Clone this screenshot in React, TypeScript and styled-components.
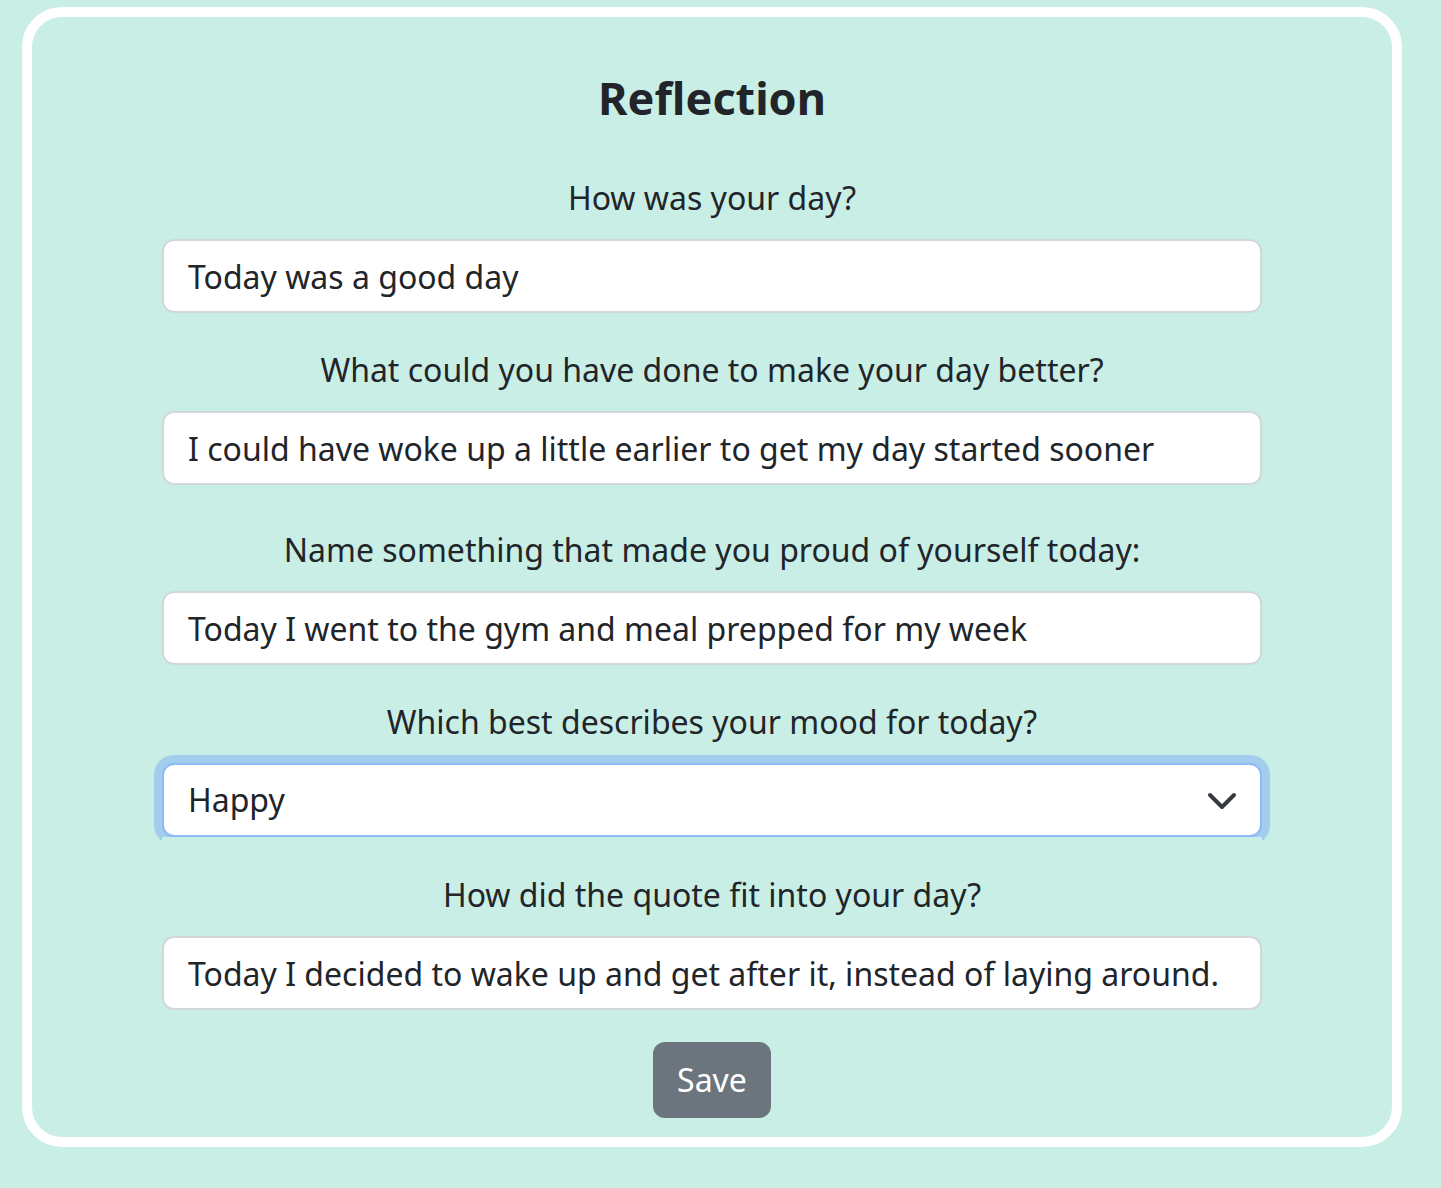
import React from "react";
import styled, { createGlobalStyle } from "styled-components";

const mint = "#c9eee6";

const GlobalStyle = createGlobalStyle`
  html, body {
    margin: 0;
    padding: 0;
    background: ${mint};
    font-family: "Noto Sans", "Open Sans", sans-serif;
    color: #212529;
  }
  * { box-sizing: border-box; }
`;

const Page = styled.div`
  padding: 7px 39px 41px 22px;
`;

const Card = styled.div`
  border: 10px solid #ffffff;
  border-radius: 40px;
  background: ${mint};
  padding: 54px 0 19px;
  display: flex;
  flex-direction: column;
  align-items: center;
`;

const Title = styled.h1`
  margin: 0 0 50px;
  font-size: 45px;
  line-height: 53px;
  font-weight: 700;
  color: #212529;
`;

const Form = styled.form`
  width: 1100px;
  display: flex;
  flex-direction: column;
`;

const Field = styled.div<{ $gap: number }>`
  position: relative;
  background: ${mint};
  padding-top: ${(p) => p.$gap}px;
  display: flex;
  flex-direction: column;
`;

const Label = styled.label`
  display: block;
  font-size: 32px;
  line-height: 48px;
  margin-bottom: 17px;
  text-align: center;
  color: #212529;
`;

const TextInput = styled.input`
  display: block;
  width: 100%;
  height: 74px;
  padding: 0 24px;
  border: 2px solid #d3d7dc;
  border-radius: 12px;
  background: #ffffff;
  font-family: "Noto Sans", "Open Sans", sans-serif;
  font-size: 32px;
  line-height: 48px;
  color: #212529;
  outline: none;
`;

const SelectWrap = styled.div`
  position: relative;
`;

const Select = styled.select`
  display: block;
  width: 100%;
  height: 74px;
  padding: 0 72px 0 24px;
  border: 2px solid #8db9f8;
  border-radius: 12px;
  background: #ffffff;
  font-family: "Noto Sans", "Open Sans", sans-serif;
  font-size: 32px;
  line-height: 48px;
  color: #212529;
  appearance: none;
  -webkit-appearance: none;
  outline: none;
  box-shadow: 0 0 0 8px #a2cdec;
`;

const Chevron = styled.svg`
  position: absolute;
  right: 24px;
  top: 25px;
  width: 32px;
  height: 24px;
  pointer-events: none;
`;

const SaveButton = styled.button`
  align-self: center;
  margin-top: 32px;
  height: 76px;
  padding: 0 24px;
  border: none;
  border-radius: 12px;
  background: #6c757d;
  color: #ffffff;
  font-family: "Noto Sans", "Open Sans", sans-serif;
  font-size: 32px;
  line-height: 48px;
  cursor: pointer;
`;

const fields = [
  { id: "day", label: "How was your day?", value: "Today was a good day", gap: 0 },
  { id: "better", label: "What could you have done to make your day better?", value: "I could have woke up a little earlier to get my day started sooner", gap: 33 },
  { id: "proud", label: "Name something that made you proud of yourself today:", value: "Today I went to the gym and meal prepped for my week", gap: 41 },
];

export default function App() {
  return (
    <>
      <GlobalStyle />
      <Page>
        <Card>
          <Title>Reflection</Title>
          <Form onSubmit={(e) => e.preventDefault()}>
            {fields.map((f) => (
              <Field key={f.id} $gap={f.gap}>
                <Label htmlFor={f.id}>{f.label}</Label>
                <TextInput id={f.id} type="text" defaultValue={f.value} />
              </Field>
            ))}
            <Field $gap={33}>
              <Label htmlFor="mood">Which best describes your mood for today?</Label>
              <SelectWrap>
                <Select id="mood" defaultValue="Happy">
                  <option>Happy</option>
                  <option>Sad</option>
                  <option>Tired</option>
                  <option>Excited</option>
                </Select>
                <Chevron viewBox="0 0 16 12" aria-hidden="true">
                  <path d="m2 3.5 6 6 6-6" fill="none" stroke="#343a40" strokeWidth="2" strokeLinecap="round" strokeLinejoin="round" />
                </Chevron>
              </SelectWrap>
            </Field>
            <Field $gap={34}>
              <Label htmlFor="quote">How did the quote fit into your day?</Label>
              <TextInput id="quote" type="text" defaultValue="Today I decided to wake up and get after it, instead of laying around." />
            </Field>
            <SaveButton type="submit">Save</SaveButton>
          </Form>
        </Card>
      </Page>
    </>
  );
}
